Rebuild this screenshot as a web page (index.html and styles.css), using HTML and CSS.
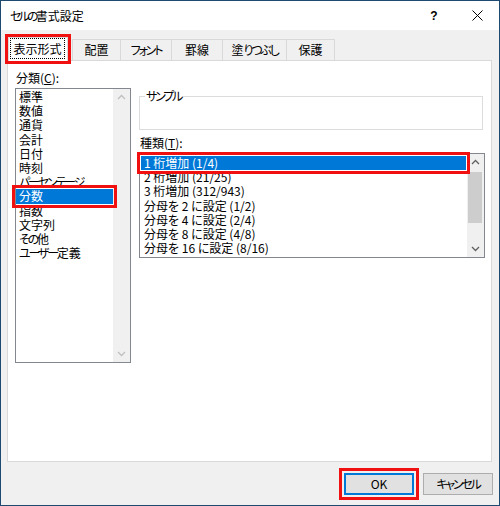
FILE: index.html
```html
<!DOCTYPE html>
<html lang="ja">
<head>
<meta charset="utf-8">
<title>セルの書式設定</title>
<link rel="stylesheet" href="styles.css">
</head>
<body>
<div class="window">
  <div class="titlebar">
    <span class="title"><span class="k">セルの</span>書式設定</span>
    <span class="help">?</span>
    <span class="close"><svg width="11" height="11" viewBox="0 0 11 11"><path d="M0.5 0.5 L10.5 10.5 M10.5 0.5 L0.5 10.5" stroke="#000" stroke-width="1" fill="none"/></svg></span>
  </div>
  <div class="tabs">
    <div class="tab sel"><span class="focus">表示形式</span></div>
    <div class="tab">配置</div>
    <div class="tab"><span class="k">フォント</span></div>
    <div class="tab">罫線</div>
    <div class="tab">塗<span class="k">りつぶし</span></div>
    <div class="tab last">保護</div>
  </div>
  <div class="panel">
    <div class="leftcol">
      <div class="label">分類(<u>C</u>):</div>
      <div class="listbox cat">
        <div class="items">
          <div class="item">標準</div>
          <div class="item">数値</div>
          <div class="item">通貨</div>
          <div class="item">会計</div>
          <div class="item">日付</div>
          <div class="item">時刻</div>
          <div class="item"><span class="k">パーセンテージ</span></div>
          <div class="item selected marked">分数</div>
          <div class="item">指数</div>
          <div class="item">文字列</div>
          <div class="item"><span class="k">その</span>他</div>
          <div class="item"><span class="k">ユーザー</span>定義</div>
        </div>
        <div class="vscroll disabled">
          <svg class="arrow" width="17" height="17" viewBox="0 0 17 17"><path d="M5 10 L8.5 6.5 L12 10" /></svg>
          <div class="track"></div>
          <svg class="arrow" width="17" height="17" viewBox="0 0 17 17"><path d="M5 7 L8.5 10.5 L12 7" /></svg>
        </div>
      </div>
    </div>
    <div class="rightcol">
      <fieldset class="sample"><legend><span class="k">サンプル</span></legend></fieldset>
      <div class="label">種類(<u>T</u>):</div>
      <div class="listbox types">
        <div class="items">
          <div class="item selected marked">1 桁増加 (1/4)</div>
          <div class="item">2 桁増加 (21/25)</div>
          <div class="item">3 桁増加 (312/943)</div>
          <div class="item">分母を 2 に設定 (1/2)</div>
          <div class="item">分母を 4 に設定 (2/4)</div>
          <div class="item">分母を 8 に設定 (4/8)</div>
          <div class="item">分母を 16 に設定 (8/16)</div>
        </div>
        <div class="vscroll">
          <svg class="arrow" width="17" height="17" viewBox="0 0 17 17"><path d="M5 10 L8.5 6.5 L12 10" /></svg>
          <div class="track"><div class="thumb"></div></div>
          <svg class="arrow" width="17" height="17" viewBox="0 0 17 17"><path d="M5 7 L8.5 10.5 L12 7" /></svg>
        </div>
      </div>
    </div>
  </div>
  <div class="footer">
    <button class="btn ok">OK</button>
    <button class="btn"><span class="k">キャンセル</span></button>
  </div>
</div>
</body>
</html>
```
FILE: styles.css
```css
html, body {
  margin: 0;
  padding: 0;
  background: #ffffff;
}
body {
  font-family: "Noto Sans CJK JP", "Noto Sans", sans-serif;
  font-size: 12px;
  color: #000;
  font-feature-settings: "palt";
}
.k {
  letter-spacing: -2.2px;
}
.window {
  width: 500px;
  height: 506px;
  box-sizing: border-box;
  border: 1px solid #1e4a72;
  background: #f0f0f0;
}
.titlebar {
  height: 29px;
  background: #ffffff;
  display: flex;
  align-items: center;
}
.title {
  margin-left: 9px;
  flex: 1;
  line-height: 14px;
}
.title .k {
  letter-spacing: -2.8px;
}
.help {
  font-family: "Liberation Sans", sans-serif;
  font-weight: bold;
  font-size: 12px;
  width: 12px;
  text-align: center;
  margin-right: 32px;
}
.close {
  display: flex;
  margin-right: 16px;
}
.tabs {
  height: 30px;
  display: flex;
  align-items: flex-end;
  padding-left: 7px;
}
.tab {
  box-sizing: border-box;
  height: 21px;
  border-top: 1px solid #d9d9d9;
  border-left: 1px solid #d9d9d9;
  background: #f0f0f0;
  display: flex;
  align-items: center;
  justify-content: center;
  line-height: 14px;
}
.tab.last {
  border-right: 1px solid #d9d9d9;
}
.tab:nth-child(2) { width: 48px; }
.tab:nth-child(3) { width: 51px; }
.tab:nth-child(4) { width: 51px; }
.tab:nth-child(5) { width: 64px; }
.tab:nth-child(6) { width: 49px; }
.tab.sel {
  width: 60px;
  height: 24px;
  margin-right: 4px;
  margin-bottom: -1px;
  border-right: 1px solid #d9d9d9;
  background: #ffffff;
  position: relative;
  z-index: 1;
  outline: 3px solid #f01010;
  align-items: stretch;
  justify-content: stretch;
}
.focus {
  flex: 1;
  margin: 0 2px 2px 1px;
  border: 1px dotted #000;
  display: flex;
  align-items: center;
  justify-content: center;
}
.panel {
  box-sizing: border-box;
  margin: 0 7px 0 6px;
  height: 402px;
  background: #ffffff;
  border: 1px solid #d9d9d9;
  display: flex;
  padding: 10px 0 0 7px;
}
.leftcol {
  width: 116px;
  display: flex;
  flex-direction: column;
}
.label {
  line-height: 14px;
  padding-left: 1px;
}
.listbox {
  box-sizing: border-box;
  border: 1px solid #828790;
  background: #fff;
  display: flex;
}
.listbox.cat {
  margin-top: 3px;
  height: 275px;
}
.items {
  flex: 1;
  display: flex;
  flex-direction: column;
}
.cat .items {
  padding-top: 1px;
}
.item {
  height: 14.2px;
  line-height: 14.2px;
  padding-left: 3px;
  white-space: nowrap;
}
.item.selected {
  background: #0078d7;
  color: #ffffff;
}
.item.marked {
  outline: 3px solid #f01010;
  outline-offset: 1px;
  position: relative;
}
.vscroll {
  width: 17px;
  background: #f0f0f0;
  display: flex;
  flex-direction: column;
}
.arrow {
  display: block;
  flex: none;
}
.arrow path {
  fill: none;
  stroke: #606060;
  stroke-width: 1.3;
}
.vscroll.disabled .arrow path {
  stroke: #bfbfbf;
}
.track {
  flex: 1;
}
.thumb {
  height: 51px;
  margin: 1px 2px 0 1px;
  background: #cdcdcd;
}
.rightcol {
  margin-left: 8px;
  width: 346px;
  padding-top: 18px;
  display: flex;
  flex-direction: column;
}
.sample {
  box-sizing: border-box;
  margin: 0;
  padding: 0;
  width: 344px;
  height: 41px;
  border: 1px solid #dcdcdc;
}
.sample legend {
  margin-left: 5px;
  padding: 0 1px;
  line-height: 14px;
}
.rightcol .label {
  margin-top: 6px;
}
.listbox.types {
  margin-top: 3px;
  height: 105px;
}
.types .items {
  padding: 2px 1px 0 1px;
}
.footer {
  display: flex;
  justify-content: flex-end;
  gap: 9px;
  padding: 11px 6px 0 0;
}
.btn {
  box-sizing: border-box;
  width: 70px;
  height: 22px;
  border: 1px solid #adadad;
  background: #e1e1e1;
  font-family: "Noto Sans CJK JP", "Noto Sans", sans-serif;
  font-feature-settings: "palt";
  font-size: 12px;
  color: #000;
  padding: 0;
  line-height: 14px;
}
.btn.ok {
  border: 1px solid #0078d7;
  box-shadow: inset 0 0 0 1px #0078d7;
  outline: 3px solid #f01010;
  outline-offset: 2px;
}
```
